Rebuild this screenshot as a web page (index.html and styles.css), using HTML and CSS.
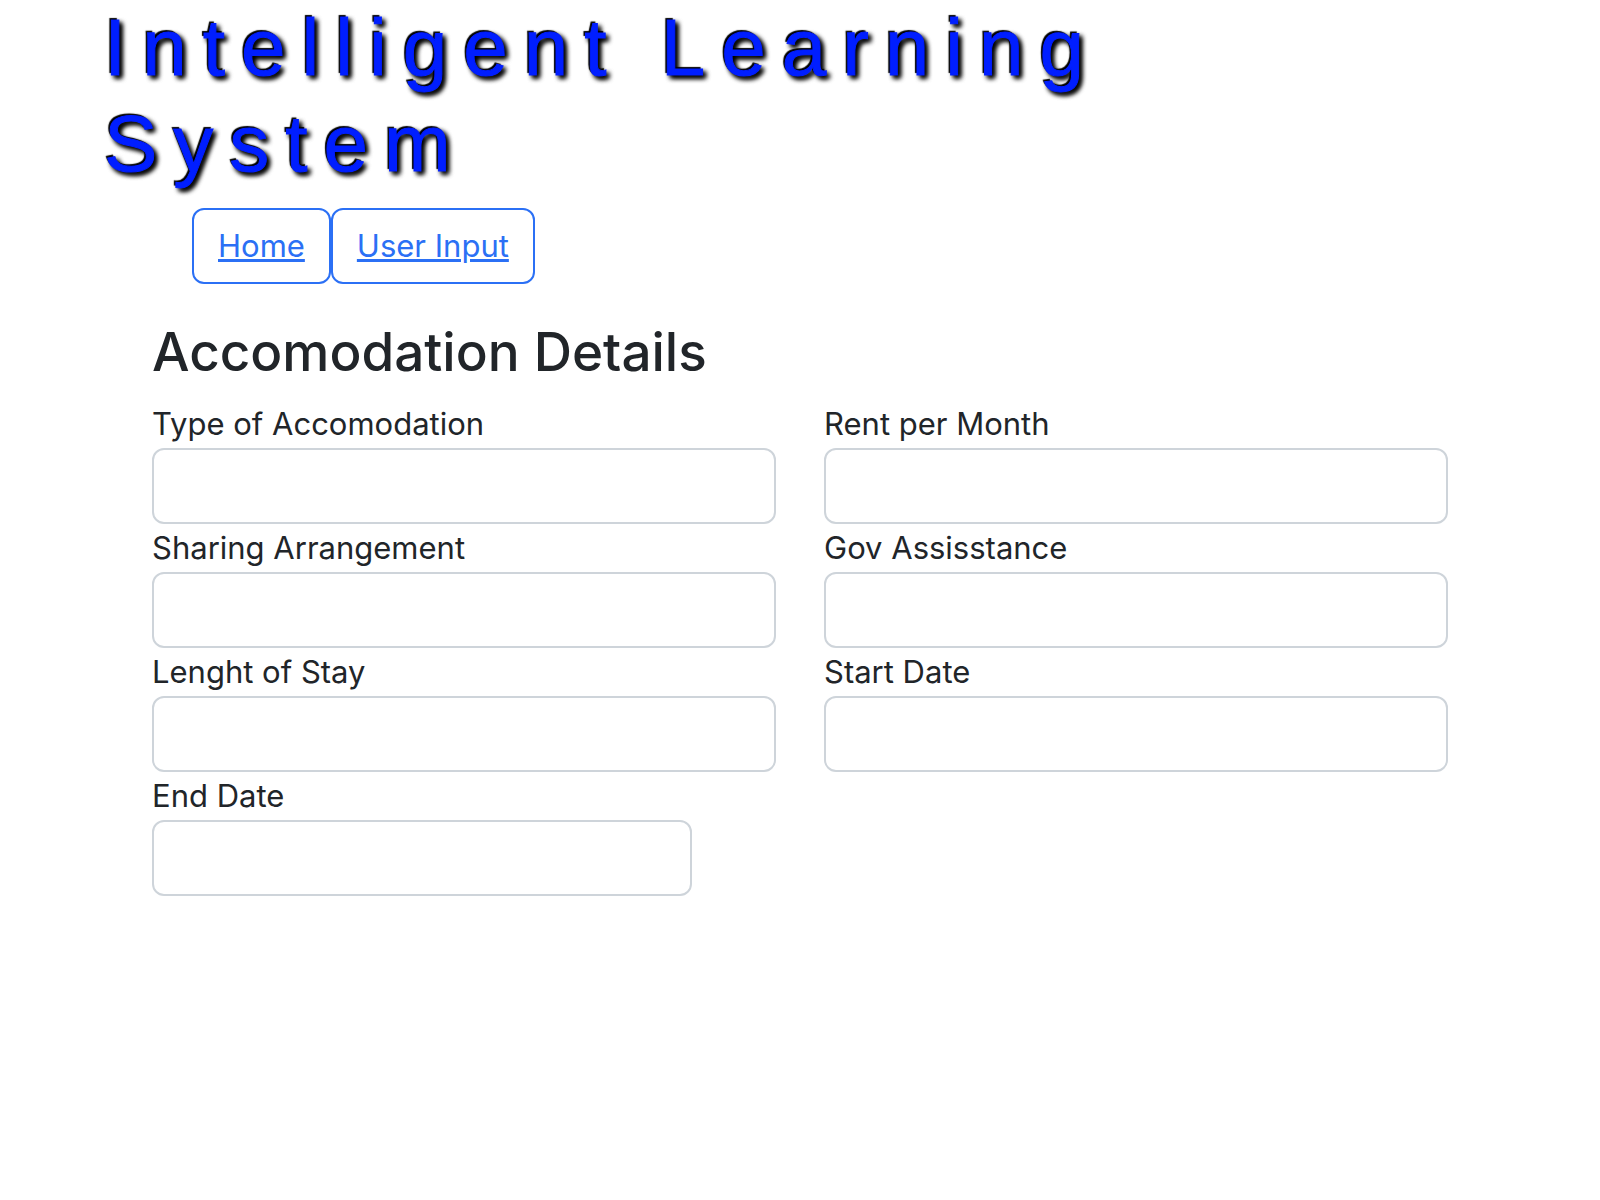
FILE: index.html
```html
<!DOCTYPE html>
<html lang="en">
<head>
  <meta charset="utf-8">
  <meta name="viewport" content="width=device-width, initial-scale=1">
  <title>Intelligent Learning System</title>
  <link rel="stylesheet" href="styles.css">
</head>
<body>
  <div class="container">
    <header>
      <h1 class="site-title">Intelligent Learning System</h1>
      <nav class="site-nav">
        <a class="nav-button" href="#home">Home</a>
        <a class="nav-button" href="#user-input">User Input</a>
      </nav>
    </header>
    <main class="details">
      <h2 class="details-title">Accomodation Details</h2>
      <form class="details-form">
        <div class="field">
          <label for="type">Type of Accomodation</label>
          <input id="type" type="text">
        </div>
        <div class="field">
          <label for="rent">Rent per Month</label>
          <input id="rent" type="text">
        </div>
        <div class="field">
          <label for="sharing">Sharing Arrangement</label>
          <input id="sharing" type="text">
        </div>
        <div class="field">
          <label for="assistance">Gov Assisstance</label>
          <input id="assistance" type="text">
        </div>
        <div class="field">
          <label for="length">Lenght of Stay</label>
          <input id="length" type="text">
        </div>
        <div class="field">
          <label for="start">Start Date</label>
          <input id="start" type="text">
        </div>
        <div class="field field-short">
          <label for="end">End Date</label>
          <input id="end" type="text">
        </div>
      </form>
    </main>
  </div>
</body>
</html>
```

FILE: styles.css
```css
*,
*::before,
*::after {
  box-sizing: border-box;
}

body {
  margin: 0;
  background: #fff;
  color: #212529;
  font-family: Inter, "Liberation Sans", sans-serif;
  font-size: 31px;
  line-height: 48px;
}

.container {
  max-width: 1440px;
  margin: 0 auto;
  padding: 0 24px;
}

.site-title {
  margin: 0 0 16px;
  color: #001eff;
  font-family: "Liberation Sans", Arial, sans-serif;
  font-size: 80px;
  font-weight: 400;
  line-height: 96px;
  letter-spacing: 16px;
  -webkit-text-stroke: 1px #001eff;
  text-shadow: -2px -2px 1px #000, 3px 3px 5px #000, 3px 3px 5px #000;
}

.site-nav {
  display: flex;
  padding-left: 88px;
}

.nav-button {
  padding: 12px 24px;
  border: 2px solid #2b70f5;
  border-radius: 12px;
  color: #2b70f5;
}

.details {
  padding: 32px 48px;
}

.details-title {
  margin: 0 0 12px;
  font-size: 53px;
  font-weight: 500;
  line-height: 72px;
}

.details-form {
  display: grid;
  grid-template-columns: 1fr 1fr;
  column-gap: 48px;
}

.field {
  display: flex;
  flex-direction: column;
}

.field-short {
  grid-column: 1 / -1;
  width: calc(100% * 5 / 12);
}

.field input {
  width: 100%;
  height: 76px;
  padding: 12px 24px;
  border: 2px solid #ced4da;
  border-radius: 12px;
  background: #fff;
  color: inherit;
  font: inherit;
}
```
